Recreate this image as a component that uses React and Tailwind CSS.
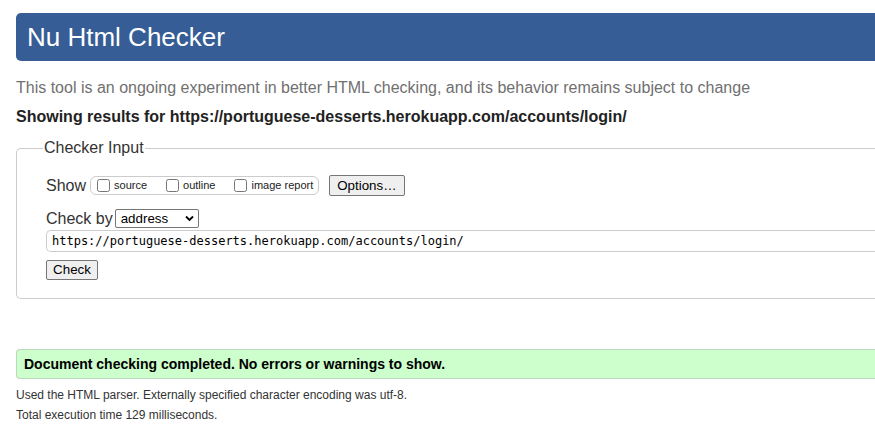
import React from 'react';

function Checkbox({ label, className = '' }) {
  return (
    <label className={`flex items-center ${className}`}>
      <input type="checkbox" className="m-0 h-[13px] w-[13px]" />
      <span className="ml-1 text-[11px] leading-[13px] text-[#222]">{label}</span>
    </label>
  );
}

export default function App() {
  const url = 'https://portuguese-desserts.herokuapp.com/accounts/login/';

  return (
    <div className="min-h-screen bg-white pl-4 pt-[13px] font-['Liberation_Sans',Arial,sans-serif] text-[#333]">
      <h1 className="h-12 rounded-l-[5px] bg-[#365d95] pl-[11px] text-[26px] leading-[48px] font-normal text-white">
        Nu Html Checker
      </h1>
      <p className="mt-[18px] text-base leading-[18px] text-[#707070]">
        This tool is an ongoing experiment in better HTML checking, and its behavior remains subject to change
      </p>
      <p className="mt-[11px] text-base font-bold leading-[18px] text-[#222]">
        Showing results for {url}
      </p>

      <fieldset className="mt-[13px] rounded-l-[5px] border border-r-0 border-[#cccccc] pb-[17px] pl-[29px] pt-[18px]">
        <legend className="-ml-[3px] px-px text-base leading-[18px] text-[#333]">Checker Input</legend>

        <div className="flex h-[21px] items-center">
          <span className="text-base leading-[18px]">Show</span>
          <div className="ml-1 flex h-[19px] items-center rounded-[6px] border border-[#cccccc] pl-[6px] pr-[5px]">
            <Checkbox label="source" />
            <Checkbox label="outline" className="ml-[19px]" />
            <Checkbox label="image report" className="ml-[19px]" />
          </div>
          <button className="ml-[10px] h-[21px] rounded-[2px] border border-[#767676] bg-[#efefef] px-[7px] text-[13.33px] leading-[19px] text-black">
            Options…
          </button>
        </div>

        <div className="mt-[13px] flex h-[19px] items-center">
          <span className="text-base leading-[18px]">Check by</span>
          <span className="relative ml-[2px] inline-flex">
            <select
              defaultValue="address"
              className="h-[19px] w-[84px] appearance-none rounded-[2px] border border-[#767676] bg-white pl-[5px] text-[13.33px] leading-[17px] text-black outline-none"
            >
              <option value="address">address</option>
              <option value="upload">file upload</option>
              <option value="text">text input</option>
            </select>
            <svg
              className="pointer-events-none absolute right-[5px] top-[6px]"
              width="9"
              height="7"
              viewBox="0 0 9 7"
              fill="none"
            >
              <path d="M1 1.5 L4.5 5 L8 1.5" stroke="#000" strokeWidth="1.8" />
            </svg>
          </span>
        </div>

        <input
          type="text"
          readOnly
          value={url}
          className="mt-[2px] block h-[22px] w-full rounded-l-[5px] border border-r-0 border-[#cccccc] pl-[5px] font-['DejaVu_Sans_Mono',monospace] text-[12px] text-black outline-none"
        />

        <button className="mt-2 h-5 w-[52px] rounded-[2px] border border-[#767676] bg-[#efefef] text-[13.33px] leading-[18px] text-black">
          Check
        </button>
      </fieldset>

      <div className="mt-[50px] h-[30px] rounded-l-[4px] border border-r-0 border-[#bcd8bc] bg-[#ccffcc] pl-[7px] text-[14px] font-bold leading-[28px] text-black">
        Document checking completed. No errors or warnings to show.
      </div>
      <p className="mt-[8px] text-[12px] leading-4 text-[#333]">
        Used the HTML parser. Externally specified character encoding was utf-8.
      </p>
      <p className="mt-1 text-[12px] leading-4 text-[#333]">Total execution time 129 milliseconds.</p>
    </div>
  );
}
